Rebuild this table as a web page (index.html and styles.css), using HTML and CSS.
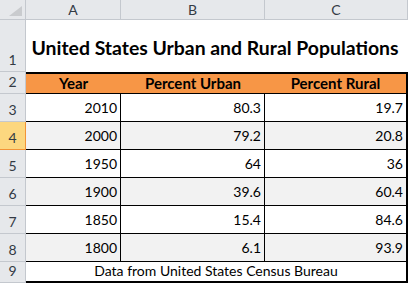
FILE: index.html
```html
<!DOCTYPE html>
<html>
<head>
<meta charset="utf-8">
<link rel="stylesheet" href="styles.css">
</head>
<body>
<div class="sheet">
  <div class="corner"><svg width="14" height="10" viewBox="0 0 14 10"><polygon points="13,0 13,10 0,10" fill="#c9cbce"/></svg></div>
  <div class="ch">A</div>
  <div class="ch">B</div>
  <div class="ch">C</div>

  <div class="rh">1</div>
  <div class="title">United States Urban and Rural Populations</div>

  <div class="rh">2</div>
  <div class="hd">Year</div>
  <div class="hd">Percent Urban</div>
  <div class="hd last">Percent Rural</div>

  <div class="rh">3</div>
  <div class="cell">2010</div><div class="cell">80.3</div><div class="cell last">19.7</div>

  <div class="rh sel">4</div>
  <div class="cell alt">2000</div><div class="cell alt">79.2</div><div class="cell alt last">20.8</div>

  <div class="rh">5</div>
  <div class="cell">1950</div><div class="cell">64</div><div class="cell last">36</div>

  <div class="rh">6</div>
  <div class="cell alt">1900</div><div class="cell alt">39.6</div><div class="cell alt last">60.4</div>

  <div class="rh">7</div>
  <div class="cell">1850</div><div class="cell">15.4</div><div class="cell last">84.6</div>

  <div class="rh">8</div>
  <div class="cell alt">1800</div><div class="cell alt">6.1</div><div class="cell alt last">93.9</div>

  <div class="rh">9</div>
  <div class="note">Data from United States Census Bureau</div>
</div>
</body>
</html>
```
FILE: styles.css
```css
html, body {
  margin: 0;
  padding: 0;
  background: #ffffff;
}

.sheet {
  display: grid;
  grid-template-columns: 26px 95px 144px 143px;
  grid-template-rows: 20px 52px 22px repeat(6, 28px) 21px;
  font-family: Lato, "Open Sans", sans-serif;
  font-size: 14px;
  color: #000;
}

.sheet > div {
  box-sizing: border-box;
}

.corner {
  background: #e6e8eb;
  border-right: 1px solid #c4c8ce;
  border-bottom: 1px solid #c4c8ce;
  display: flex;
  align-items: flex-end;
  justify-content: flex-end;
  padding: 0 2px 3px 0;
}

.corner svg {
  display: block;
}

.ch {
  background: #e6e8eb;
  border-right: 1px solid #c4c8ce;
  border-bottom: 1px solid #c4c8ce;
  color: #333a44;
  display: flex;
  align-items: center;
  justify-content: center;
  font-size: 14px;
}

.rh {
  background: #e6e8eb;
  border-right: 1px solid #c4c8ce;
  border-bottom: 1px solid #c4c8ce;
  color: #333a44;
  display: flex;
  align-items: flex-end;
  justify-content: center;
  padding-bottom: 3px;
  font-size: 14px;
}

.rh.sel {
  background: #fcd77f;
  border-right-color: #f29436;
  border-bottom-color: #f29436;
}

.title {
  grid-column: 2 / 5;
  display: flex;
  align-items: center;
  justify-content: center;
  font-weight: 700;
  font-size: 19.4px;
  padding: 2px 4px 0 0;
}

.hd {
  background: #f79646;
  border-top: 2px solid #000;
  border-bottom: 1px solid #000;
  font-weight: 700;
  display: flex;
  align-items: flex-end;
  justify-content: center;
  padding-bottom: 1px;
  font-size: 15px;
}

.hd.last {
  border-right: 2px solid #000;
}

.cell {
  background: #ffffff;
  border-right: 1px solid #000;
  border-bottom: 1px solid #000;
  display: flex;
  align-items: flex-end;
  justify-content: flex-end;
  padding: 0 3px 5px 0;
}

.cell.alt {
  background: #f2f2f2;
}

.cell.last {
  border-right: 2px solid #000;
}

.note {
  grid-column: 2 / 5;
  border-right: 2px solid #000;
  border-bottom: 2px solid #000;
  display: flex;
  align-items: flex-end;
  justify-content: center;
  padding-bottom: 2px;
  font-size: 14px;
}
```
